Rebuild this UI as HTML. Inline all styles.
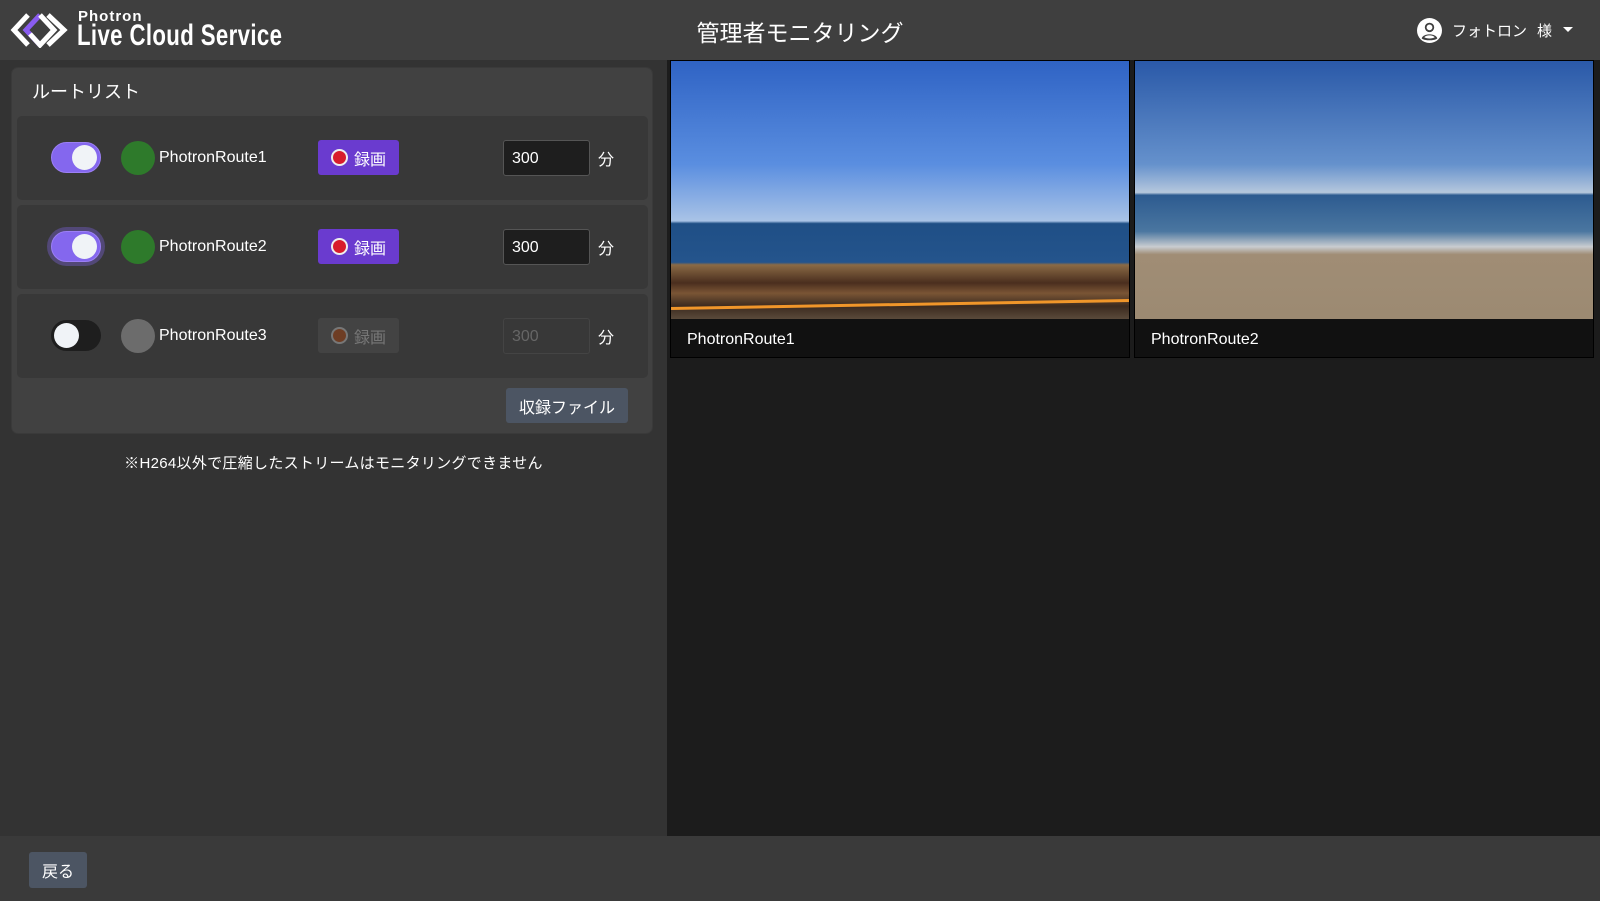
<!DOCTYPE html>
<html><head><meta charset="utf-8"><style>
*{box-sizing:border-box;margin:0;padding:0}
body{width:1600px;height:901px;overflow:hidden;background:#1c1c1c;font-family:"Liberation Sans","Noto Sans CJK JP",sans-serif;color:#fff;position:relative}
.abs{position:absolute}
.hdr{left:0;top:0;width:1600px;height:60px;background:#3f3f3f}
.left{left:0;top:60px;width:667px;height:776px;background:#333}
.card{left:11px;top:67px;width:642px;height:367px;background:#414141;border-radius:7px;border:1px solid #3a3a3a}
.row{left:17px;width:631px;height:84px;background:#383838;border-radius:5px}
.tog{width:50px;height:31px;border-radius:16px}
.knob{width:25px;height:25px;border-radius:50%;background:#f0f3f7;top:3px}
.dot{width:34px;height:34px;border-radius:50%}
.name{font-size:16px}
.rec{width:81px;height:35px;border-radius:3px;font-size:16px;display:flex;align-items:center;justify-content:center;gap:6px}
.rd{width:17px;height:17px;border-radius:50%;border:2px solid #eee}
.inp{width:87px;height:36px;border-radius:3px;border:1px solid #555;font-size:16px;padding-left:8px;line-height:36px}
.vid{width:460px;height:298px;background:#111;border:1px solid #000}
.foot{left:0;top:836px;width:1600px;height:65px;background:#3a3a3a}
.btn{background:#4c5563;border-radius:3px;font-size:16px;display:flex;align-items:center;justify-content:center}
</style></head><body>
<div class="abs hdr"></div>
<svg class="abs" style="left:10px;top:12px" width="60" height="36" viewBox="0 0 60 36">
<path d="M18 3 L4 18 L18 33" stroke="#fff" stroke-width="5" fill="none"/>
<path d="M30 3 L16 18 L30 33" stroke="#8a5cf0" stroke-width="5" fill="none"/>
<path d="M30 3 L44 18 L30 33 L20 22" stroke="#fff" stroke-width="5" fill="none"/>
<path d="M38 3 L54 18 L38 33" stroke="#fff" stroke-width="5" fill="none"/>
</svg>
<div class="abs" style="left:78px;top:8px;font-size:15px;font-weight:bold;letter-spacing:1px">Photron</div>
<div class="abs" style="left:77px;top:19px;font-size:30px;transform:scaleX(0.74);transform-origin:left;letter-spacing:0.5px;font-weight:bold">Live Cloud Service</div>
<div class="abs" style="left:0;width:1600px;top:14px;text-align:center;font-size:23px">管理者モニタリング</div>
<svg class="abs" style="left:1417px;top:18px" width="25" height="25" viewBox="0 0 24 24"><circle cx="12" cy="12" r="12" fill="#fff"/><circle cx="12" cy="9" r="4.5" fill="#3f3f3f"/><path d="M4.5 19.5 C6 14.5 18 14.5 19.5 19.5 C17 22 7 22 4.5 19.5Z" fill="#3f3f3f"/><circle cx="12" cy="9" r="2.8" fill="#fff"/><path d="M7 18.5 C8.5 16 15.5 16 17 18.5 C15 20 9 20 7 18.5Z" fill="#fff"/></svg>
<div class="abs" style="left:1452px;top:20px;font-size:15px">フォトロン</div>
<div class="abs" style="left:1537px;top:20px;font-size:15px">様</div>
<div class="abs" style="left:1563px;top:27px;width:0;height:0;border-left:5px solid transparent;border-right:5px solid transparent;border-top:5px solid #fff"></div>

<div class="abs left"></div>
<div class="abs card"></div>
<div class="abs" style="left:32px;top:78px;font-size:18px">ルートリスト</div>

<div class="abs row" style="top:116px"></div>
<div class="abs tog" style="left:51px;top:142px;background:#8467ee;border:1px solid #9b7ff5"><div class="abs knob" style="left:20px;top:2px"></div></div>
<div class="abs dot" style="left:121px;top:141px;background:#2e7a2b"></div>
<div class="abs name" style="left:159px;top:149px">PhotronRoute1</div>
<div class="abs rec" style="left:318px;top:140px;background:#6a3bcf"><div class="rd" style="background:#d81c2c"></div>録画</div>
<div class="abs inp" style="left:503px;top:140px;background:#1e1e1e">300</div>
<div class="abs" style="left:598px;top:146px;font-size:16px">分</div>

<div class="abs row" style="top:205px"></div>
<div class="abs tog" style="left:51px;top:231px;background:#8467ee;border:1px solid #9b7ff5;box-shadow:0 0 0 4px rgba(132,103,238,.35)"><div class="abs knob" style="left:20px;top:2px"></div></div>
<div class="abs dot" style="left:121px;top:230px;background:#2e7a2b"></div>
<div class="abs name" style="left:159px;top:238px">PhotronRoute2</div>
<div class="abs rec" style="left:318px;top:229px;background:#6a3bcf"><div class="rd" style="background:#d81c2c"></div>録画</div>
<div class="abs inp" style="left:503px;top:229px;background:#1e1e1e">300</div>
<div class="abs" style="left:598px;top:235px;font-size:16px">分</div>

<div class="abs row" style="top:294px"></div>
<div class="abs tog" style="left:51px;top:320px;background:#1e1e1e"><div class="abs knob" style="left:3px"></div></div>
<div class="abs dot" style="left:121px;top:319px;background:#6c6c6c"></div>
<div class="abs name" style="left:159px;top:327px">PhotronRoute3</div>
<div class="abs rec" style="left:318px;top:318px;background:#434343;color:#777"><div class="rd" style="background:#6e3d24;border-color:#777"></div>録画</div>
<div class="abs inp" style="left:503px;top:318px;background:#383838;border-color:#444;color:#666">300</div>
<div class="abs" style="left:598px;top:324px;font-size:16px">分</div>

<div class="abs btn" style="left:506px;top:388px;width:122px;height:35px">収録ファイル</div>
<div class="abs" style="left:0;width:667px;top:452px;text-align:center;font-size:15px;letter-spacing:0.3px">※H264以外で圧縮したストリームはモニタリングできません</div>

<div class="abs vid" style="left:670px;top:60px"></div>
<div class="abs" style="left:671px;top:61px;width:458px;height:258px;background:linear-gradient(#2f63c4 0%,#5a8ee0 40%,#a9c3e6 62%,#1f4f86 63%,#24548c 78%,#8a6a45 79%,#4a2e1e 86%,#7a5535 90%,#3b2a1f 95%,#5a4a3a 100%)"></div>
<div class="abs" style="left:671px;top:303px;width:458px;height:3px;background:#f0962a;transform:rotate(-1deg)"></div>
<div class="abs" style="left:687px;top:331px;font-size:16px">PhotronRoute1</div>
<div class="abs vid" style="left:1134px;top:60px"></div>
<div class="abs" style="left:1135px;top:61px;width:458px;height:258px;background:linear-gradient(#2a59a8 0%,#6591cc 40%,#b6c8dd 51%,#2d5b90 52%,#4a76a0 66%,#c9ccd0 72%,#a08d75 75%,#9c8a72 100%)"></div>
<div class="abs" style="left:1151px;top:331px;font-size:16px">PhotronRoute2</div>

<div class="abs foot"></div>
<div class="abs btn" style="left:29px;top:852px;width:58px;height:36px">戻る</div>
</body></html>
